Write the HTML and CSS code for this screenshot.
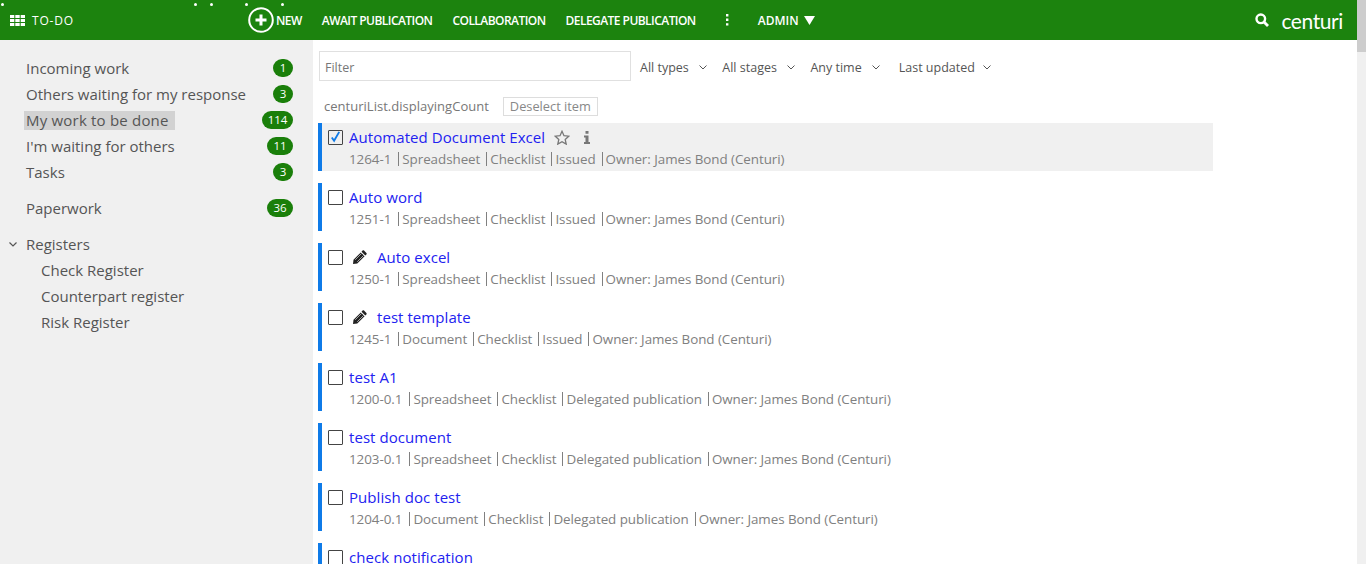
FILE: index.html
```html
<!DOCTYPE html>
<html lang="en">
<head>
    <meta charset="UTF-8">
    <title>To-Do</title>
    <link rel="stylesheet" href="styles.css">
</head>
<body>
    <div class="page">
        <div class="app">
            <header class="topbar">
                <i class="speck speck-a"></i><i class="speck speck-b"></i><i class="speck speck-c"></i><i class="speck speck-d"></i><i class="speck speck-e"></i>
                <div class="brand-menu">
                    <svg class="grid-icon" width="15" height="11" viewBox="0 0 15 11"><path fill="#fff" d="M0 0h4.300v3H0zM5.300 0h4.400v3H5.300zM10.700 0H15v3h-4.300zM0 4h4.300v3H0zM5.300 4h4.400v3H5.300zM10.700 4H15v3h-4.300zM0 8h4.300v3H0zM5.300 8h4.400v3H5.300zM10.700 8H15v3h-4.300z"/></svg>
                    <span>TO-DO</span>
                </div>
                <nav class="topnav">
                    <a class="nav-new">
                        <svg width="26" height="26" viewBox="0 0 26 26"><circle cx="13" cy="13" r="11.800" fill="none" stroke="#fff" stroke-width="2"/><path d="M13 7.500v11M7.500 13h11" stroke="#fff" stroke-width="3"/></svg>
                        NEW
                    </a>
                    <a>AWAIT PUBLICATION</a>
                    <a>COLLABORATION</a>
                    <a>DELEGATE PUBLICATION</a>
                    <svg class="kebab" width="4" height="12" viewBox="0 0 4 12"><path fill="#fff" d="M1 0h2.400v2.400H1zM1 4.600h2.400V7H1zM1 9.200h2.400v2.400H1z"/></svg>
                    <a class="nav-admin">ADMIN <svg width="11" height="9" viewBox="0 0 11 9"><path fill="#fff" d="M0 0h11L5.500 9z"/></svg></a>
                </nav>
                <div class="top-right">
                    <svg width="14" height="14" viewBox="0 0 14 14"><circle cx="5.800" cy="5.800" r="4.300" fill="none" stroke="#fff" stroke-width="2.400"/><path d="M9 9l4 4" stroke="#fff" stroke-width="2.800"/></svg>
                    <span class="logo">centuri</span>
                </div>
            </header>
            <div class="body-row">
                <aside class="sidebar">
                    <ul class="side-list">
                        <li><span>Incoming work</span><b class="badge">1</b></li>
                        <li><span>Others waiting for my response</span><b class="badge">3</b></li>
                        <li><span class="current">My work to be done</span><b class="badge badge-wide">114</b></li>
                        <li><span>I'm waiting for others</span><b class="badge badge-mid">11</b></li>
                        <li><span>Tasks</span><b class="badge">3</b></li>
                        <li class="gap-top"><span>Paperwork</span><b class="badge badge-mid">36</b></li>
                        <li class="gap-top registers">
                            <svg width="8" height="5" viewBox="0 0 8 5"><path d="M.5.5L4 4 7.500.5" fill="none" stroke="#555" stroke-width="1.200"/></svg>
                            <span>Registers</span>
                        </li>
                        <li class="sub"><span>Check Register</span></li>
                        <li class="sub"><span>Counterpart register</span></li>
                        <li class="sub"><span>Risk Register</span></li>
                    </ul>
                </aside>
                <main class="content">
                    <div class="filters">
                        <div class="filter-box">Filter</div>
                        <div class="drop">All types <svg width="8" height="5" viewBox="0 0 8 5"><path d="M.5.5L4 4 7.500.5" fill="none" stroke="#555"/></svg></div>
                        <div class="drop">All stages <svg width="8" height="5" viewBox="0 0 8 5"><path d="M.5.5L4 4 7.500.5" fill="none" stroke="#555"/></svg></div>
                        <div class="drop">Any time <svg width="8" height="5" viewBox="0 0 8 5"><path d="M.5.5L4 4 7.500.5" fill="none" stroke="#555"/></svg></div>
                        <div class="drop drop-last">Last updated <svg width="8" height="5" viewBox="0 0 8 5"><path d="M.5.5L4 4 7.500.5" fill="none" stroke="#555"/></svg></div>
                    </div>
                    <div class="count-row">
                        <span>centuriList.displayingCount</span>
                        <button class="deselect">Deselect item</button>
                    </div>
                    <div class="doc selected">
                        <div class="doc-title">
                            <span class="check"><svg width="14" height="14" viewBox="0 0 14 14"><path d="M3 7.500l2.500 3.500L11 1.500" fill="none" stroke="#0f7be8" stroke-width="2"/></svg></span>
                            <a>Automated Document Excel</a>
                            <svg class="star" width="16" height="15" viewBox="0 0 16 15"><path d="M8 1.300l2 4.400 4.700.5-3.500 3.200 1 4.700L8 11.700l-4.200 2.400 1-4.700L1.300 6.200 6 5.700z" fill="none" stroke="#777" stroke-width="1.300"/></svg>
                            <svg class="info" width="6" height="13" viewBox="0 0 6 13"><path fill="#777" d="M1.500 0h3v2.800h-3zM0 4.500h4.500v6.500H6v2H0v-2h1.500V6.500H0z"/></svg>
                        </div>
                        <div class="doc-meta"><span>1264-1</span><span>Spreadsheet</span><span>Checklist</span><span>Issued</span><span>Owner: James Bond (Centuri)</span></div>
                    </div>
                    <div class="doc">
                        <div class="doc-title"><span class="check"></span><a>Auto word</a></div>
                        <div class="doc-meta"><span>1251-1</span><span>Spreadsheet</span><span>Checklist</span><span>Issued</span><span>Owner: James Bond (Centuri)</span></div>
                    </div>
                    <div class="doc">
                        <div class="doc-title">
                            <span class="check"></span>
                            <svg class="pencil" width="14" height="14" viewBox="0 0 14 14"><path fill="#222" d="M11 .6l2.400 2.400c.4.4.4 1 0 1.400l-1.100 1.100-3.800-3.800 1.100-1.100c.4-.4 1-.4 1.400 0zM7.800 2.400l3.800 3.800-7.300 7.300L0 14l.5-4.300z"/><path d="M2.200 9.800l6.300-6.300M4.200 11.800l6.300-6.300" stroke="#fff" stroke-width=".6"/></svg>
                            <a>Auto excel</a>
                        </div>
                        <div class="doc-meta"><span>1250-1</span><span>Spreadsheet</span><span>Checklist</span><span>Issued</span><span>Owner: James Bond (Centuri)</span></div>
                    </div>
                    <div class="doc">
                        <div class="doc-title">
                            <span class="check"></span>
                            <svg class="pencil" width="14" height="14" viewBox="0 0 14 14"><path fill="#222" d="M11 .6l2.400 2.400c.4.4.4 1 0 1.400l-1.100 1.100-3.800-3.800 1.100-1.100c.4-.4 1-.4 1.400 0zM7.800 2.400l3.800 3.800-7.300 7.300L0 14l.5-4.300z"/><path d="M2.200 9.800l6.300-6.300M4.200 11.800l6.300-6.300" stroke="#fff" stroke-width=".6"/></svg>
                            <a>test template</a>
                        </div>
                        <div class="doc-meta"><span>1245-1</span><span>Document</span><span>Checklist</span><span>Issued</span><span>Owner: James Bond (Centuri)</span></div>
                    </div>
                    <div class="doc">
                        <div class="doc-title"><span class="check"></span><a>test A1</a></div>
                        <div class="doc-meta"><span>1200-0.1</span><span>Spreadsheet</span><span>Checklist</span><span>Delegated publication</span><span>Owner: James Bond (Centuri)</span></div>
                    </div>
                    <div class="doc">
                        <div class="doc-title"><span class="check"></span><a>test document</a></div>
                        <div class="doc-meta"><span>1203-0.1</span><span>Spreadsheet</span><span>Checklist</span><span>Delegated publication</span><span>Owner: James Bond (Centuri)</span></div>
                    </div>
                    <div class="doc">
                        <div class="doc-title"><span class="check"></span><a>Publish doc test</a></div>
                        <div class="doc-meta"><span>1204-0.1</span><span>Document</span><span>Checklist</span><span>Delegated publication</span><span>Owner: James Bond (Centuri)</span></div>
                    </div>
                    <div class="doc">
                        <div class="doc-title"><span class="check"></span><a>check notification</a></div>
                    </div>
                </main>
            </div>
        </div>
        <div class="scrollbar"><div class="scroll-thumb"></div></div>
    </div>
</body>
</html>
```

FILE: styles.css
```css
html, body {
    margin: 0;
    padding: 0;
    height: 100%;
    overflow: hidden;
}
body {
    font-family: "Open Sans", "Noto Sans", Arial, sans-serif;
    color: #555;
    background-color: #fff;
}
a {
    text-decoration: none;
}
.page {
    display: flex;
    height: 564px;
}
.app {
    flex: 1;
    min-width: 0;
    display: flex;
    flex-direction: column;
}
.scrollbar {
    width: 9px;
    background-color: #f0f0f0;
}
.scroll-thumb {
    height: 52px;
    background-color: #cdcdcd;
}

/* top bar */
.topbar {
    position: relative;
    flex: none;
    height: 40px;
    display: flex;
    align-items: center;
    background-color: #1c830e;
    color: #fff;
    font-size: 12px;
}
.speck {
    position: absolute;
    top: 3px;
    width: 3px;
    height: 3px;
    background-color: #fff;
    border-radius: 50%;
}
.speck-a { left: 1px; }
.speck-b { left: 194px; }
.speck-c { left: 210px; }
.speck-d { left: 245px; }
.speck-e { left: 281px; }
.brand-menu {
    width: 248px;
    padding-left: 10px;
    box-sizing: border-box;
    display: flex;
    align-items: center;
    gap: 7px;
    letter-spacing: 0.8px;
}
.topnav {
    display: flex;
    align-items: center;
    gap: 20px;
    letter-spacing: -0.55px;
}
.topnav a {
    color: #fff;
    font-weight: 600;
}
.nav-new {
    display: flex;
    align-items: center;
    gap: 2px;
}
.kebab {
    margin: 0 9px 0 9px;
}
.topnav .nav-admin {
    letter-spacing: 0;
}
.nav-admin svg {
    margin-left: 2px;
}
.top-right {
    margin-left: auto;
    padding-right: 14px;
    display: flex;
    align-items: center;
    gap: 12px;
}
.logo {
    font-family: "Lato", sans-serif;
    font-size: 21px;
    letter-spacing: -0.4px;
    line-height: 1;
}

/* left menu */
.body-row {
    flex: 1;
    min-height: 0;
    display: flex;
}
.sidebar {
    width: 313px;
    flex: none;
    background-color: #f0f0f0;
    box-sizing: border-box;
    padding: 15px 20px 0 0;
}
.side-list {
    list-style: none;
    margin: 0;
    padding: 0;
    font-size: 15px;
}
.side-list li {
    height: 26px;
    display: flex;
    align-items: center;
    justify-content: space-between;
    padding-left: 26px;
}
.side-list .gap-top {
    margin-top: 10px;
}
.side-list .current {
    background-color: #d2d2d2;
    margin-left: -2px;
    padding: 0 6px 0 2px;
    line-height: 19px;
    letter-spacing: 0.2px;
}
.badge {
    background-color: #1a7f0a;
    color: #fff;
    font-size: 11.500px;
    font-weight: 400;
    width: 20px;
    height: 18px;
    line-height: 18px;
    text-align: center;
    border-radius: 9px;
}
.badge-wide { width: 31px; }
.badge-mid { width: 26px; }
.side-list .registers {
    justify-content: flex-start;
    padding-left: 9px;
    gap: 9px;
}
.side-list .sub {
    padding-left: 41px;
}

/* list */
.content {
    flex: 1;
    min-width: 0;
    padding: 11px 0 0 5px;
    overflow: hidden;
}
.filters {
    display: flex;
    align-items: center;
    height: 30px;
    font-size: 12.500px;
}
.filter-box {
    width: 312px;
    height: 30px;
    box-sizing: border-box;
    border: 1px solid #e0e0e0;
    padding: 1px 0 0 5px;
    margin-left: 1px;
    line-height: 30px;
    color: #777;
    margin-right: 9px;
}
.drop {
    display: flex;
    align-items: center;
    gap: 10px;
    margin-right: 15.500px;
    padding-top: 2px;
}
.drop-last {
    margin-left: 3.500px;
    gap: 8px;
}
.count-row {
    display: flex;
    align-items: center;
    gap: 14px;
    height: 20px;
    margin: 15px 0 7px 6px;
    font-size: 13px;
    letter-spacing: 0.02px;
    color: #777;
}
.deselect {
    font: inherit;
    font-size: 12.800px;
    color: #888;
    background: #fff;
    border: 1px solid #ddd;
    padding: 0 6px;
    height: 19px;
    line-height: 16px;
}
.doc {
    width: 895px;
    height: 48px;
    box-sizing: border-box;
    border-left: 4px solid #0f7be8;
    margin-bottom: 12px;
    padding: 3px 0 0 6px;
}
.doc.selected {
    background-color: #f0f0f0;
}
.doc-title {
    display: flex;
    align-items: center;
    height: 22px;
    font-size: 15px;
    letter-spacing: 0.06px;
}
.doc-title a {
    color: #2222f0;
}
.check {
    width: 13px;
    height: 13px;
    border: 1px solid #444;
    border-radius: 1px;
    margin-right: 6px;
    flex: none;
    display: flex;
    align-items: center;
    justify-content: center;
}
.pencil {
    margin: 0 10px 0 4px;
}
.star {
    margin-left: 9px;
}
.info {
    margin-left: 14px;
}
.doc-meta {
    display: flex;
    padding-left: 21px;
    margin-top: 1px;
    font-size: 13.400px;
    letter-spacing: -0.05px;
    color: #808080;
    line-height: 20px;
}
.doc-meta span:first-child {
    margin-right: 1px;
}
.doc-meta span + span {
    margin-left: 6px;
    padding-left: 3px;
    border-left: 1px solid #808080;
    height: 14px;
    line-height: 14px;
    align-self: center;
}
```
